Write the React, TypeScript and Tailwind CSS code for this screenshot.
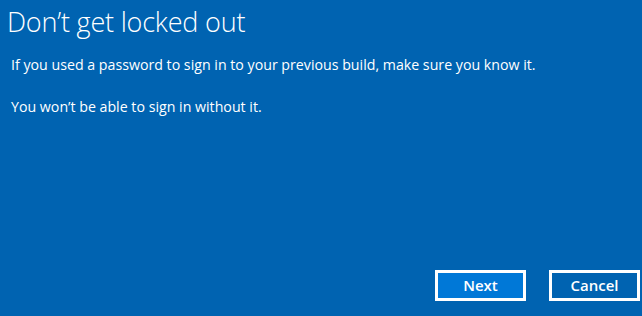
export default function App() {
  return (
    <div className="w-[642px] h-[316px] bg-[#0063b1] text-white flex flex-col font-['Open_Sans',sans-serif]">
      <h1 className="pl-[7px] pt-[4px] text-[27px] font-light leading-[36px] tracking-[-0.2px]">
        Don’t get locked out
      </h1>
      <p className="pl-[11px] mt-[15px] text-[14.2px] leading-[20px]">
        If you used a password to sign in to your previous build, make sure you know it.
      </p>
      <p className="pl-[11px] mt-[22px] text-[14.2px] leading-[20px]">
        You won’t be able to sign in without it.
      </p>
      <div className="mt-auto mb-[15px] flex justify-end gap-[23px] pr-[2px]">
        <button className="w-[91px] h-[31px] border-[3px] border-white bg-[#0078d7] text-[15px] font-semibold">
          Next
        </button>
        <button className="w-[91px] h-[31px] border-[3px] border-white bg-[#0063b1] text-[15px] font-semibold">
          Cancel
        </button>
      </div>
    </div>
  );
}
